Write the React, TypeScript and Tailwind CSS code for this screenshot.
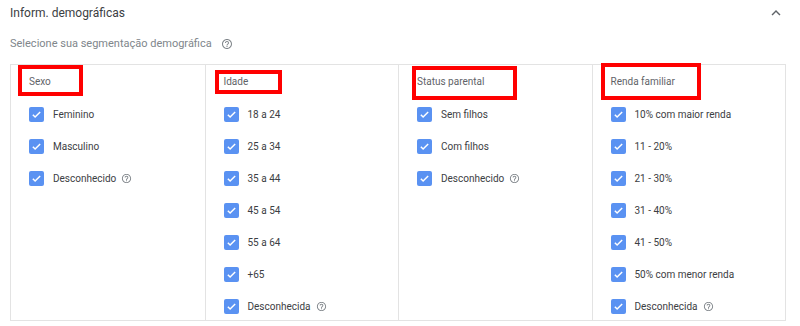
import { ReactNode } from "react";

type Column = {
  title: string;
  mark: string;
  items: { label: string; help?: boolean }[];
};

const columns: Column[] = [
  {
    title: "Sexo",
    mark: "left-[7px] top-[0px] w-[65px] h-[31px]",
    items: [{ label: "Feminino" }, { label: "Masculino" }, { label: "Desconhecido", help: true }],
  },
  {
    title: "Idade",
    mark: "left-[9px] top-[5px] w-[67px] h-[24px]",
    items: [
      { label: "18 a 24" },
      { label: "25 a 34" },
      { label: "35 a 44" },
      { label: "45 a 54" },
      { label: "55 a 64" },
      { label: "+65" },
      { label: "Desconhecida", help: true },
    ],
  },
  {
    title: "Status parental",
    mark: "left-[13px] top-[1px] w-[105px] h-[34px]",
    items: [{ label: "Sem filhos" }, { label: "Com filhos" }, { label: "Desconhecido", help: true }],
  },
  {
    title: "Renda familiar",
    mark: "left-[8px] top-[-2px] w-[100px] h-[37px]",
    items: [
      { label: "10% com maior renda" },
      { label: "11 - 20%" },
      { label: "21 - 30%" },
      { label: "31 - 40%" },
      { label: "41 - 50%" },
      { label: "50% com menor renda" },
      { label: "Desconhecida", help: true },
    ],
  },
];

const HelpIcon = ({ size = 11 }: { size?: number }) => (
  <svg width={size} height={size} viewBox="0 0 24 24" fill="#80868b">
    <path d="M11 18h2v-2h-2v2zm1-16C6.48 2 2 6.48 2 12s4.48 10 10 10 10-4.48 10-10S17.52 2 12 2zm0 18c-4.41 0-8-3.59-8-8s3.59-8 8-8 8 3.59 8 8-3.59 8-8 8zm0-14c-2.21 0-4 1.790-4 4h2c0-1.1.9-2 2-2s2 .9 2 2c0 2-3 1.75-3 5h2c0-2.25 3-2.5 3-5 0-2.21-1.79-4-4-4z" />
  </svg>
);

const Checkbox = () => (
  <span className="flex h-[15px] w-[15px] items-center justify-center rounded-[2px] bg-[#5a92f2]">
    <svg width="11" height="11" viewBox="0 0 24 24" fill="none" stroke="white" strokeWidth="3.2">
      <path d="M4 12.5l5 5L20 6.5" />
    </svg>
  </span>
);

const Row = ({ children }: { children: ReactNode }) => (
  <div className="flex h-[27px] items-center gap-[9px] pl-[18px]">{children}</div>
);

export default function App() {
  return (
    <div className="bg-white pl-[10px] h-[326px] font-['Roboto',sans-serif]">
      <div className="w-[776px]">
        <div className="flex h-[26px] items-center justify-between">
          <span className="text-[12px] text-[#3c4043]">Inform. demográficas</span>
          <svg width="18" height="18" viewBox="0 0 24 24" fill="#5f6368" className="mr-[1px]">
            <path d="M12 8l-6 6 1.41 1.41L12 10.83l4.59 4.58L18 14z" />
          </svg>
        </div>
        <div className="mt-[9px] flex h-[18px] items-center gap-[9px] text-[11px] text-[#80868b]">
          <span>Selecione sua segmentação demográfica</span>
          <HelpIcon size={12} />
        </div>
        <div className="mt-[11px] grid grid-cols-4 border border-[#e3e3e3]">
          {columns.map((col, i) => (
            <div key={col.title} className={i > 0 ? "border-l border-[#e3e3e3]" : ""}>
              <div className="relative flex h-[33px] items-center pl-[18px] text-[10px] text-[#5f6368]">
                {col.title}
                <div className={`absolute border-4 border-[#ff0000] ${col.mark}`} />
              </div>
              <div className="flex flex-col gap-[5px] pt-[3px]">
                {col.items.map((item) => (
                  <Row key={item.label}>
                    <Checkbox />
                    <span className="flex items-center gap-[5px] text-[10px] text-[#3c4043]">
                      {item.label}
                      {item.help && <HelpIcon size={11} />}
                    </span>
                  </Row>
                ))}
              </div>
            </div>
          ))}
        </div>
      </div>
    </div>
  );
}
